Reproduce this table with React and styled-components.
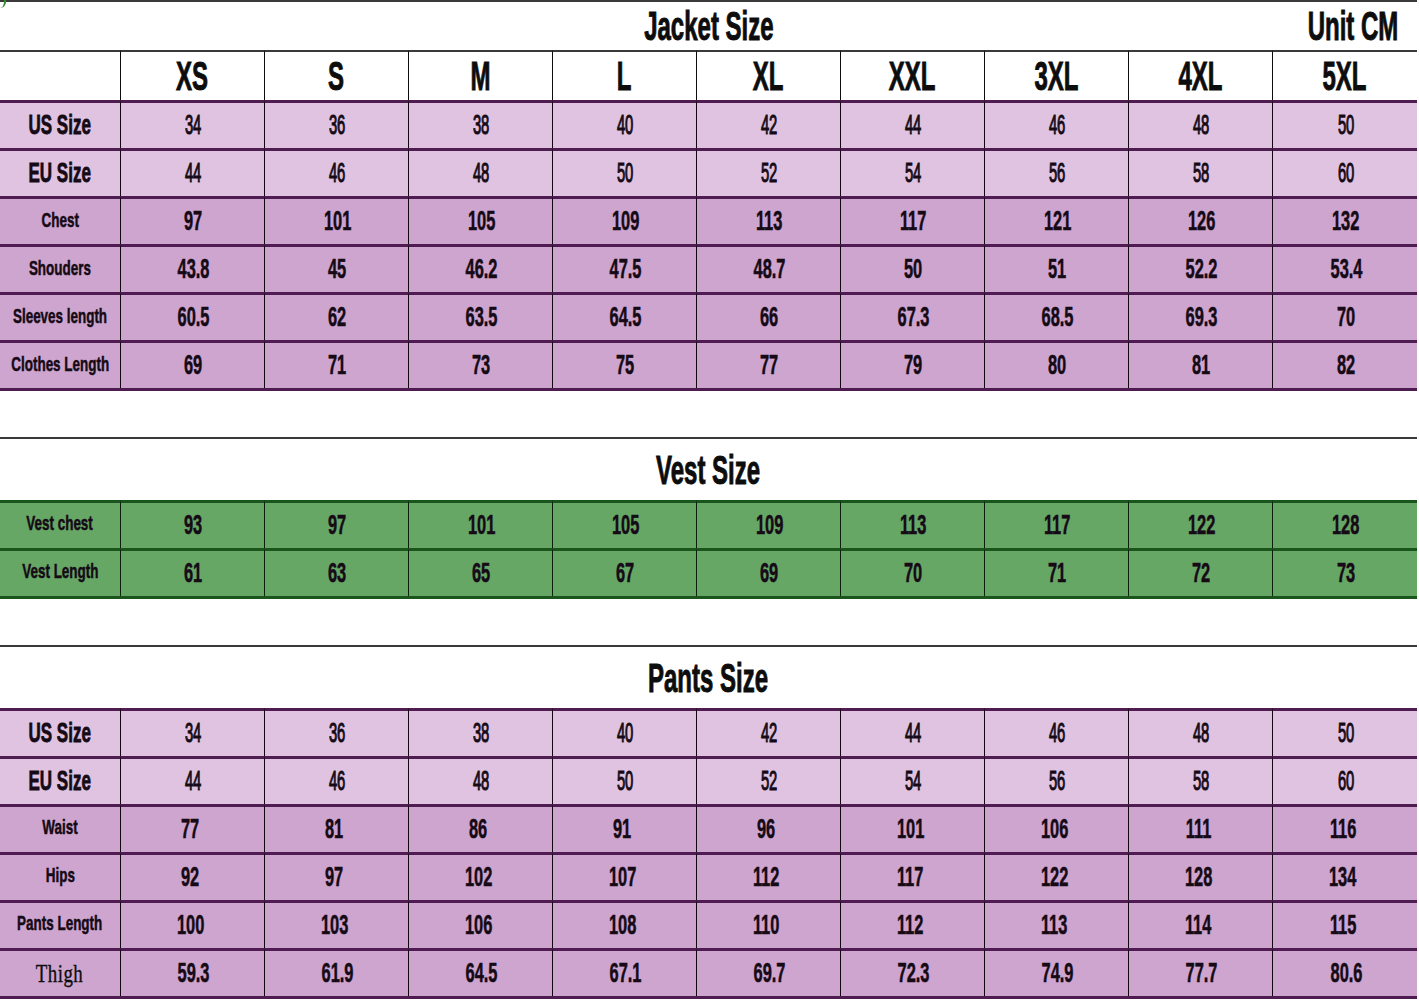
import React from 'react'
import styled, { createGlobalStyle } from 'styled-components'

const sizes = ['XS', 'S', 'M', 'L', 'XL', 'XXL', '3XL', '4XL', '5XL']

const jacketRows = [
  { label: 'US Size', tone: 'light', big: true, values: [34, 36, 38, 40, 42, 44, 46, 48, 50] },
  { label: 'EU Size', tone: 'light', big: true, values: [44, 46, 48, 50, 52, 54, 56, 58, 60] },
  { label: 'Chest', tone: 'dark', values: [97, 101, 105, 109, 113, 117, 121, 126, 132] },
  { label: 'Shouders', tone: 'dark', values: [43.8, 45, 46.2, 47.5, 48.7, 50, 51, 52.2, 53.4] },
  { label: 'Sleeves length', tone: 'dark', values: [60.5, 62, 63.5, 64.5, 66, 67.3, 68.5, 69.3, 70] },
  { label: 'Clothes Length', tone: 'dark', values: [69, 71, 73, 75, 77, 79, 80, 81, 82] },
]

const vestRows = [
  { label: 'Vest chest', tone: 'green', values: [93, 97, 101, 105, 109, 113, 117, 122, 128] },
  { label: 'Vest Length', tone: 'green', values: [61, 63, 65, 67, 69, 70, 71, 72, 73] },
]

const pantsRows = [
  { label: 'US Size', tone: 'light', big: true, values: [34, 36, 38, 40, 42, 44, 46, 48, 50] },
  { label: 'EU Size', tone: 'light', big: true, values: [44, 46, 48, 50, 52, 54, 56, 58, 60] },
  { label: 'Waist', tone: 'dark', shift: true, values: [77, 81, 86, 91, 96, 101, 106, 111, 116] },
  { label: 'Hips', tone: 'dark', shift: true, values: [92, 97, 102, 107, 112, 117, 122, 128, 134] },
  { label: 'Pants Length', tone: 'dark', shift: true, values: [100, 103, 106, 108, 110, 112, 113, 114, 115] },
  { label: 'Thigh', tone: 'dark', serif: true, values: ['59.3', '61.9', '64.5', '67.1', '69.7', '72.3', '74.9', '77.7', '80.6'] },
]

const tones = {
  light: { bg: '#dfc3e0', line: '#4e1c50', vline: '#120812' },
  dark: { bg: '#cda5cf', line: '#4e1c50', vline: '#120812' },
  green: { bg: '#66a766', line: '#1a561b', vline: '#0c1f0c' },
}

const SizeChart = ({ title, unit, showHeader, rows, titleHeight }) => {
  const lastTone = tones[rows[rows.length - 1].tone]
  return (
    <Table>
      <TitleBar $h={titleHeight}>
        <span />
        <Title>{title}</Title>
        <Unit>{unit ? <Title $right>{unit}</Title> : null}</Unit>
      </TitleBar>
      {showHeader && (
        <>
          <HeadCell />
          {sizes.map((s, i) => (
            <HeadCell key={s} $last={i === sizes.length - 1}>
              <Title>{s}</Title>
            </HeadCell>
          ))}
        </>
      )}
      {rows.map((row) => (
        <React.Fragment key={row.label}>
          <Cell $tone={row.tone}>
            {row.serif ? (
              <SerifLabel>{row.label}</SerifLabel>
            ) : (
              <Label $big={row.big}>{row.label}</Label>
            )}
          </Cell>
          {row.values.map((v, i) => (
            <Cell key={i} $tone={row.tone} $last={i === row.values.length - 1}>
              <Value $light={row.big} $shift={row.shift}>{v}</Value>
            </Cell>
          ))}
        </React.Fragment>
      ))}
      <BottomRule $color={lastTone.line} />
    </Table>
  )
}

const App = () => {
  return (
    <>
      <GlobalStyle />
      <Sheet>
        <Corner />
        <SizeChart title="Jacket Size" unit="Unit CM" showHeader rows={jacketRows} titleHeight={48} />
        <SizeChart title="Vest Size" rows={vestRows} titleHeight={61} />
        <SizeChart title="Pants Size" rows={pantsRows} titleHeight={61} />
      </Sheet>
    </>
  )
}

export default App

const GlobalStyle = createGlobalStyle`
  html, body {
    margin: 0;
    padding: 0;
    background: #ffffff;
  }
  body {
    font-family: "Liberation Sans", Arial, sans-serif;
    color: #150a15;
  }
`

const Sheet = styled.div`
  position: relative;
  width: 1417px;
  display: flex;
  flex-direction: column;
  gap: 46px;
`

const Corner = styled.div`
  position: absolute;
  left: 0;
  top: 0;
  width: 6px;
  height: 8px;
  border-right: 2px solid #2f8a2f;
  border-bottom-right-radius: 8px;
  box-sizing: border-box;
`

const Table = styled.div`
  display: grid;
  grid-template-columns: 121px repeat(9, 144px);
  border-top: 2px solid #3a3a3a;
`

const TitleBar = styled.div`
  grid-column: 1 / -1;
  height: ${(p) => p.$h}px;
  display: grid;
  grid-template-columns: 1fr auto 1fr;
  align-items: center;
  background: #ffffff;
`

const Unit = styled.div`
  display: flex;
  justify-content: flex-end;
  padding-right: 19px;
`

const Title = styled.span`
  display: inline-block;
  font-size: 30px;
  font-weight: 700;
  line-height: 1;
  color: #0d0d0d;
  -webkit-text-stroke: 0.7px #0d0d0d;
  transform: scale(0.8, 1.35);
  transform-origin: ${(p) => (p.$right ? 'right center' : 'center')};
  white-space: nowrap;
`

const HeadCell = styled.div`
  height: 46px;
  border-top: 2px solid #3a3a3a;
  border-right: ${(p) => (p.$last ? 'none' : '1.5px solid #0d0d0d')};
  display: flex;
  align-items: center;
  justify-content: center;
  background: #ffffff;
  padding-top: 1px;
  padding-bottom: 1px;
  box-sizing: content-box;
`

const Cell = styled.div`
  height: 41px;
  padding-bottom: 4px;
  border-top: 3px solid ${(p) => tones[p.$tone].line};
  border-right: ${(p) => (p.$last ? 'none' : `1.5px solid ${tones[p.$tone].vline}`)};
  background: ${(p) => tones[p.$tone].bg};
  display: flex;
  align-items: center;
  justify-content: center;
  box-sizing: content-box;
  overflow: hidden;
`

const Label = styled.span`
  display: inline-block;
  font-size: ${(p) => (p.$big ? '20px' : '16px')};
  font-weight: 700;
  line-height: 1;
  color: #150a15;
  -webkit-text-stroke: ${(p) => (p.$big ? '0.6px' : '0.4px')} #150a15;
  transform: ${(p) => (p.$big ? 'scale(0.85, 1.4)' : 'scale(0.84, 1.3)')};
  white-space: nowrap;
`

const SerifLabel = styled.span`
  display: inline-block;
  font-family: "Liberation Serif", "Times New Roman", serif;
  font-size: 22px;
  line-height: 1;
  letter-spacing: 0.5px;
  color: #0d0d0d;
  -webkit-text-stroke: 0.3px #0d0d0d;
  transform: scale(0.86, 1.12);
  padding-top: 4px;
`

const Value = styled.span`
  display: inline-block;
  font-size: 20px;
  font-weight: ${(p) => (p.$light ? 400 : 700)};
  line-height: 1;
  color: #150a15;
  transform: ${(p) => (p.$light ? 'scale(0.74, 1.38)' : 'scale(0.82, 1.36)')};
  -webkit-text-stroke: ${(p) => (p.$light ? '0.8px' : '0.4px')} #150a15;
  margin-left: 2px;
  margin-right: ${(p) => (p.$shift ? '6px' : '0')};
  white-space: nowrap;
`

const BottomRule = styled.div`
  grid-column: 1 / -1;
  height: 3px;
  background: ${(p) => p.$color};
`
